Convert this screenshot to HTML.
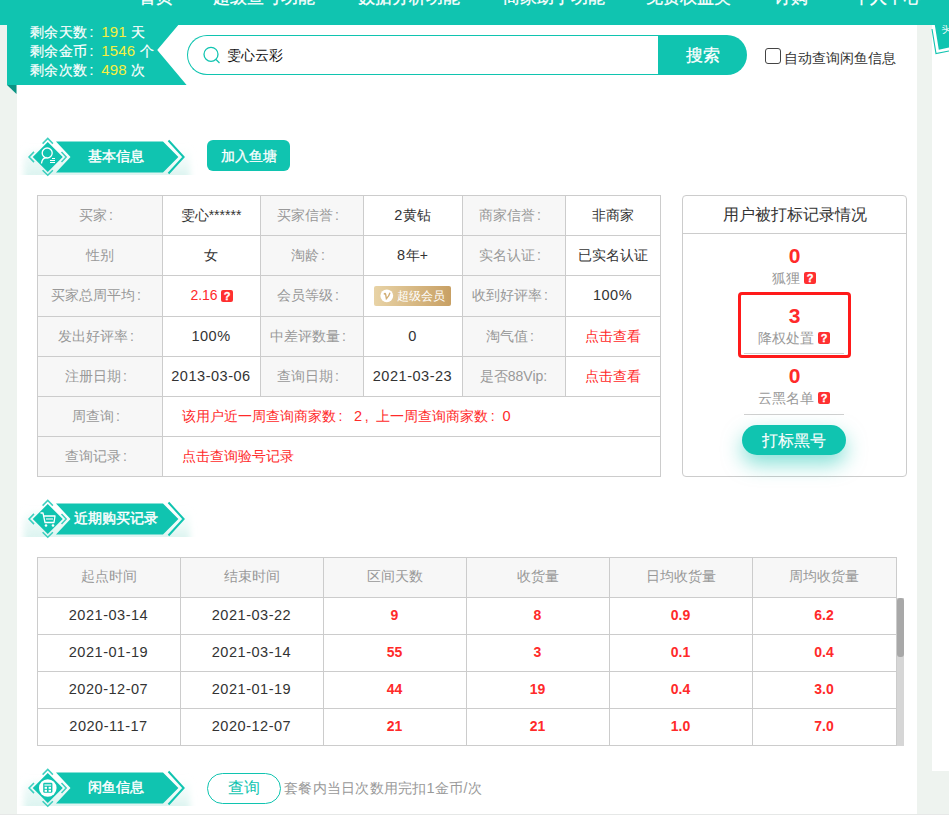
<!DOCTYPE html>
<html><head><meta charset="utf-8"><style>
html,body{margin:0;padding:0;width:949px;height:815px;overflow:hidden;background:#fff}
body{position:relative;font-family:"Liberation Sans",sans-serif}
.b{position:absolute}
.c{display:inline-block;width:1em;text-indent:.17em;text-align:left}
.n{font-size:1.04em;letter-spacing:.5px}
.t{position:absolute;white-space:nowrap;line-height:19px}
.q{position:absolute;width:12px;height:12px;background:#ff3030;color:#fff;border-radius:2px;font-size:11px;line-height:12px;text-align:center;font-weight:bold;-webkit-text-stroke:.3px #fff}
</style></head><body>
<div class="b" style="left:0px;top:0px;width:949px;height:815px;background:#eef3ef"></div>
<div class="b" style="left:17px;top:25px;width:900px;height:789px;background:#fff"></div>
<div class="b" style="left:932px;top:25px;width:17px;height:746px;background:#fff"></div>
<div class="b" style="left:0px;top:0px;width:949px;height:25px;background:#10c4b0"></div>
<div class="t" style="left:139px;top:-12px;font-size:17px;color:#fff;-webkit-text-stroke:.3px #fff;">首页</div>
<div class="t" style="left:213px;top:-12px;font-size:17px;color:#fff;-webkit-text-stroke:.3px #fff;">超级查号功能</div>
<div class="t" style="left:358px;top:-12px;font-size:17px;color:#fff;-webkit-text-stroke:.3px #fff;">数据分析功能</div>
<div class="t" style="left:503px;top:-12px;font-size:17px;color:#fff;-webkit-text-stroke:.3px #fff;">商家助手功能</div>
<div class="t" style="left:646px;top:-12px;font-size:17px;color:#fff;-webkit-text-stroke:.3px #fff;">免费权益类</div>
<div class="t" style="left:774px;top:-12px;font-size:17px;color:#fff;-webkit-text-stroke:.3px #fff;">订购</div>
<div class="t" style="left:853px;top:-12px;font-size:17px;color:#fff;-webkit-text-stroke:.3px #fff;">个人中心</div>
<svg class="b" style="left:925px;top:25px" width="24" height="40" viewBox="0 0 24 40">
<polygon points="9.8,0 13.8,24.7 24,22.5 24,0" fill="#10c4b0"/>
<polyline points="7,4 11,28.5 24,26" fill="none" stroke="#10c4b0" stroke-width="1.1"/>
<text x="17" y="8" font-size="10" fill="#fff" transform="rotate(-10 17 8)">头</text>
</svg>
<svg class="b" style="left:0;top:25px" width="200" height="75" viewBox="0 0 200 75">
<polygon points="7,0 178.3,0 157.2,25 186.6,60 7,60" fill="#10c4b0"/>
<polygon points="7,60 16.5,60 16.5,69" fill="#0a9484"/>
</svg>
<div class="t" style="left:30px;top:23px;font-size:14px;color:#fff;line-height:17px;letter-spacing:.3px;-webkit-text-stroke:.2px #fff">剩余天数<span class="c">:</span><span style="color:#f7ef3f;font-size:15px;letter-spacing:.2px;margin-left:0;-webkit-text-stroke:0">191</span> 天</div>
<div class="t" style="left:30px;top:42px;font-size:14px;color:#fff;line-height:17px;letter-spacing:.3px;-webkit-text-stroke:.2px #fff">剩余金币<span class="c">:</span><span style="color:#f7ef3f;font-size:15px;letter-spacing:.2px;margin-left:0;-webkit-text-stroke:0">1546</span> 个</div>
<div class="t" style="left:30px;top:61px;font-size:14px;color:#fff;line-height:17px;letter-spacing:.3px;-webkit-text-stroke:.2px #fff">剩余次数<span class="c">:</span><span style="color:#f7ef3f;font-size:15px;letter-spacing:.2px;margin-left:0;-webkit-text-stroke:0">498</span> 次</div>
<div class="b" style="left:187px;top:35px;width:500px;height:40px;border:1px solid #10c4b0;border-right:none;border-radius:20px 0 0 20px;box-sizing:border-box"></div>
<div class="b" style="left:658px;top:35px;width:89px;height:40px;background:#10c4b0;border-radius:0 20px 20px 0"></div>
<svg class="b" style="left:200px;top:44px" width="24" height="22" viewBox="0 0 24 22">
<circle cx="11" cy="10.3" r="7" fill="none" stroke="#10c4b0" stroke-width="1.3"/>
<line x1="16" y1="15.5" x2="19.5" y2="19" stroke="#10c4b0" stroke-width="1.3"/>
</svg>
<div class="t" style="left:227px;top:46px;font-size:14px;color:#111;">雯心云彩</div>
<div class="t" style="left:658px;top:46px;font-size:17px;color:#fff;width:89px;text-align:center;-webkit-text-stroke:.25px #fff;">搜索</div>
<div class="b" style="left:765px;top:48px;width:16px;height:16px;border:1px solid #444;border-radius:3px;box-sizing:border-box"></div>
<div class="t" style="left:784px;top:49px;font-size:14px;color:#333;">自动查询闲鱼信息</div>
<svg class="b" style="left:0;top:131.8px" width="200" height="50" viewBox="0 131.8 200 50">
<defs><linearGradient id="g156" x1="0" y1="0" x2="0" y2="1"><stop offset="0" stop-color="#e3f7f4" stop-opacity="0"/><stop offset="1" stop-color="#d3f1ec"/></linearGradient>
<filter id="f156" x="-20%" y="-50%" width="140%" height="200%"><feGaussianBlur stdDeviation="3"/></filter>
<clipPath id="c156"><rect x="0" y="131.8" width="200" height="43.0"/></clipPath></defs>
<g clip-path="url(#c156)"><rect x="24" y="146.8" width="166" height="34" fill="url(#g156)" filter="url(#f156)"/>
<ellipse cx="44" cy="162.8" rx="20" ry="14" fill="#d9f3ef" filter="url(#f156)" opacity=".25"/></g>
<polygon points="56,141.3 163,141.3 178.4,156.8 163,172.3 56,172.3 70.5,156.8" fill="#10c4b0"/>
<polyline points="168.5,140.3 183.6,156.8 168.5,173.3" fill="none" stroke="#10c4b0" stroke-width="2"/>
<polygon points="47.75,141.8 62.75,156.8 47.75,171.8 32.75,156.8" fill="#10c4b0"/>
<g fill="none" stroke="#10c4b0" stroke-width="1.5" opacity=".8">
<polyline points="42.6,143.4 47.75,138.20000000000002 52.9,143.4"/>
<polyline points="42.6,170.0 47.75,175.0 52.9,170.0"/>
<polyline points="34,151.70000000000002 29,156.8 34,161.9"/>
<polyline points="61.5,151.70000000000002 66.2,156.8 61.5,161.9"/></g>
<circle cx="47.2" cy="152.8" r="5" fill="none" stroke="#fff" stroke-width="1.3"/>
<path d="M41.5,163.3 Q42,157.8 46.5,157.3" fill="none" stroke="#fff" strole-width="1.3" stroke-width="1.3"/>
<line x1="52" y1="158.3" x2="55" y2="158.3" stroke="#fff" stroke-width="1"/>
<line x1="50" y1="160.3" x2="55" y2="160.3" stroke="#fff" stroke-width="1"/>
<line x1="50" y1="162.3" x2="55" y2="162.3" stroke="#fff" stroke-width="1"/>
</svg>
<div class="t" style="left:88px;top:146.8px;font-size:14px;color:#fff;-webkit-text-stroke:0.45px #fff;">基本信息</div>
<svg class="b" style="left:0;top:493.6px" width="200" height="50" viewBox="0 493.6 200 50">
<defs><linearGradient id="g518" x1="0" y1="0" x2="0" y2="1"><stop offset="0" stop-color="#e3f7f4" stop-opacity="0"/><stop offset="1" stop-color="#d3f1ec"/></linearGradient>
<filter id="f518" x="-20%" y="-50%" width="140%" height="200%"><feGaussianBlur stdDeviation="3"/></filter>
<clipPath id="c518"><rect x="0" y="493.6" width="200" height="43.0"/></clipPath></defs>
<g clip-path="url(#c518)"><rect x="24" y="508.6" width="166" height="34" fill="url(#g518)" filter="url(#f518)"/>
<ellipse cx="44" cy="524.6" rx="20" ry="14" fill="#d9f3ef" filter="url(#f518)" opacity=".25"/></g>
<polygon points="56,503.1 163,503.1 178.4,518.6 163,534.1 56,534.1 70.5,518.6" fill="#10c4b0"/>
<polyline points="168.5,502.1 183.6,518.6 168.5,535.1" fill="none" stroke="#10c4b0" stroke-width="2"/>
<polygon points="47.75,503.6 62.75,518.6 47.75,533.6 32.75,518.6" fill="#10c4b0"/>
<g fill="none" stroke="#10c4b0" stroke-width="1.5" opacity=".8">
<polyline points="42.6,505.20000000000005 47.75,500.0 52.9,505.20000000000005"/>
<polyline points="42.6,531.8000000000001 47.75,536.8000000000001 52.9,531.8000000000001"/>
<polyline points="34,513.5 29,518.6 34,523.7"/>
<polyline points="61.5,513.5 66.2,518.6 61.5,523.7"/></g>
<path d="M40.5,512.6 L43,512.6 L45,522.1 L54,522.1 L55,515.6 L44,515.6" fill="none" stroke="#fff" stroke-width="1.3" stroke-linejoin="round"/>
<line x1="46" y1="518.6" x2="53" y2="518.6" stroke="#fff" stroke-width="1.1"/>
<circle cx="46" cy="525.1" r="1.3" fill="#fff"/><circle cx="53" cy="525.1" r="1.3" fill="#fff"/>
</svg>
<div class="t" style="left:74px;top:508.6px;font-size:14px;color:#fff;-webkit-text-stroke:0.45px #fff;">近期购买记录</div>
<svg class="b" style="left:0;top:762.6px" width="200" height="50" viewBox="0 762.6 200 50">
<defs><linearGradient id="g787" x1="0" y1="0" x2="0" y2="1"><stop offset="0" stop-color="#e3f7f4" stop-opacity="0"/><stop offset="1" stop-color="#d3f1ec"/></linearGradient>
<filter id="f787" x="-20%" y="-50%" width="140%" height="200%"><feGaussianBlur stdDeviation="3"/></filter>
<clipPath id="c787"><rect x="0" y="762.6" width="200" height="43.0"/></clipPath></defs>
<g clip-path="url(#c787)"><rect x="24" y="777.6" width="166" height="34" fill="url(#g787)" filter="url(#f787)"/>
<ellipse cx="44" cy="793.6" rx="20" ry="14" fill="#d9f3ef" filter="url(#f787)" opacity=".25"/></g>
<polygon points="56,772.1 163,772.1 178.4,787.6 163,803.1 56,803.1 70.5,787.6" fill="#10c4b0"/>
<polyline points="168.5,771.1 183.6,787.6 168.5,804.1" fill="none" stroke="#10c4b0" stroke-width="2"/>
<polygon points="47.75,772.6 62.75,787.6 47.75,802.6 32.75,787.6" fill="#10c4b0"/>
<g fill="none" stroke="#10c4b0" stroke-width="1.5" opacity=".8">
<polyline points="42.6,774.2 47.75,769.0 52.9,774.2"/>
<polyline points="42.6,800.8000000000001 47.75,805.8000000000001 52.9,800.8000000000001"/>
<polyline points="34,782.5 29,787.6 34,792.7"/>
<polyline points="61.5,782.5 66.2,787.6 61.5,792.7"/></g>
<circle cx="47.75" cy="787.6" r="8.8" fill="#fff"/>
<rect x="43.2" y="782.4" width="9.2" height="10" rx="1.2" fill="#10c4b0"/>
<rect x="44.4" y="784.0" width="6.8" height="1.2" fill="#fff"/>
<rect x="44.6" y="786.4" width="2.4" height="2" fill="#fff"/><rect x="48.6" y="786.4" width="2.4" height="2" fill="#fff"/>
<rect x="44.6" y="789.4" width="2.4" height="2" fill="#fff"/><rect x="48.6" y="789.4" width="2.4" height="2" fill="#fff"/>
</svg>
<div class="t" style="left:88px;top:777.6px;font-size:14px;color:#fff;-webkit-text-stroke:0.45px #fff;">闲鱼信息</div>
<div class="b" style="left:207px;top:140px;width:83px;height:31px;background:#10c4b0;border-radius:6px"></div>
<div class="t" style="left:207px;top:147px;font-size:14px;color:#fff;width:83px;text-align:center;-webkit-text-stroke:.3px #fff;">加入鱼塘</div>
<div class="b" style="left:38px;top:196px;width:124px;height:39px;background:#f7f7f7"></div>
<div class="b" style="left:261px;top:196px;width:102px;height:39px;background:#f7f7f7"></div>
<div class="b" style="left:463px;top:196px;width:102px;height:39px;background:#f7f7f7"></div>
<div class="b" style="left:38px;top:236px;width:124px;height:39px;background:#f7f7f7"></div>
<div class="b" style="left:261px;top:236px;width:102px;height:39px;background:#f7f7f7"></div>
<div class="b" style="left:463px;top:236px;width:102px;height:39px;background:#f7f7f7"></div>
<div class="b" style="left:38px;top:276px;width:124px;height:40px;background:#f7f7f7"></div>
<div class="b" style="left:261px;top:276px;width:102px;height:40px;background:#f7f7f7"></div>
<div class="b" style="left:463px;top:276px;width:102px;height:40px;background:#f7f7f7"></div>
<div class="b" style="left:38px;top:317px;width:124px;height:39px;background:#f7f7f7"></div>
<div class="b" style="left:261px;top:317px;width:102px;height:39px;background:#f7f7f7"></div>
<div class="b" style="left:463px;top:317px;width:102px;height:39px;background:#f7f7f7"></div>
<div class="b" style="left:38px;top:357px;width:124px;height:39px;background:#f7f7f7"></div>
<div class="b" style="left:261px;top:357px;width:102px;height:39px;background:#f7f7f7"></div>
<div class="b" style="left:463px;top:357px;width:102px;height:39px;background:#f7f7f7"></div>
<div class="b" style="left:38px;top:397px;width:124px;height:39px;background:#f7f7f7"></div>
<div class="b" style="left:38px;top:437px;width:124px;height:39px;background:#f7f7f7"></div>
<div class="b" style="left:37px;top:195px;width:624px;height:1px;background:#cccccc"></div>
<div class="b" style="left:37px;top:235px;width:624px;height:1px;background:#cccccc"></div>
<div class="b" style="left:37px;top:275px;width:624px;height:1px;background:#cccccc"></div>
<div class="b" style="left:37px;top:316px;width:624px;height:1px;background:#cccccc"></div>
<div class="b" style="left:37px;top:356px;width:624px;height:1px;background:#cccccc"></div>
<div class="b" style="left:37px;top:396px;width:624px;height:1px;background:#cccccc"></div>
<div class="b" style="left:37px;top:436px;width:624px;height:1px;background:#cccccc"></div>
<div class="b" style="left:37px;top:476px;width:624px;height:1px;background:#cccccc"></div>
<div class="b" style="left:37px;top:195px;width:1px;height:281px;background:#cccccc"></div>
<div class="b" style="left:162px;top:195px;width:1px;height:281px;background:#cccccc"></div>
<div class="b" style="left:260px;top:195px;width:1px;height:201px;background:#cccccc"></div>
<div class="b" style="left:363px;top:195px;width:1px;height:201px;background:#cccccc"></div>
<div class="b" style="left:462px;top:195px;width:1px;height:201px;background:#cccccc"></div>
<div class="b" style="left:565px;top:195px;width:1px;height:201px;background:#cccccc"></div>
<div class="b" style="left:660px;top:195px;width:1px;height:281px;background:#cccccc"></div>
<div class="t" style="left:37px;top:205.5px;font-size:14px;color:#999;width:125px;text-align:center;">买家<span class="c">:</span></div>
<div class="t" style="left:162px;top:205.5px;font-size:14px;color:#333;width:98px;text-align:center;">雯心******</div>
<div class="t" style="left:260px;top:205.5px;font-size:14px;color:#999;width:103px;text-align:center;">买家信誉<span class="c">:</span></div>
<div class="t" style="left:363px;top:205.5px;font-size:14px;color:#333;width:99px;text-align:center;"><span class="n">2</span>黄钻</div>
<div class="t" style="left:462px;top:205.5px;font-size:14px;color:#999;width:103px;text-align:center;">商家信誉<span class="c">:</span></div>
<div class="t" style="left:565px;top:205.5px;font-size:14px;color:#333;width:95px;text-align:center;">非商家</div>
<div class="t" style="left:37px;top:245.5px;font-size:14px;color:#999;width:125px;text-align:center;">性别</div>
<div class="t" style="left:162px;top:245.5px;font-size:14px;color:#333;width:98px;text-align:center;">女</div>
<div class="t" style="left:260px;top:245.5px;font-size:14px;color:#999;width:103px;text-align:center;">淘龄<span class="c">:</span></div>
<div class="t" style="left:363px;top:245.5px;font-size:14px;color:#333;width:99px;text-align:center;"><span class="n">8</span>年+</div>
<div class="t" style="left:462px;top:245.5px;font-size:14px;color:#999;width:103px;text-align:center;">实名认证<span class="c">:</span></div>
<div class="t" style="left:565px;top:245.5px;font-size:14px;color:#333;width:95px;text-align:center;">已实名认证</div>
<div class="t" style="left:37px;top:286.0px;font-size:14px;color:#999;width:125px;text-align:center;">买家总周平均<span class="c">:</span></div>
<div class="t" style="left:162px;top:286.0px;font-size:14px;color:#333;width:84px;text-align:center;"><span style="color:#ff2a2a">2.16</span></div>
<span class="q" style="left:221px;top:290px">?</span>
<div class="t" style="left:260px;top:286.0px;font-size:14px;color:#999;width:103px;text-align:center;">会员等级<span class="c">:</span></div>
<div class="b" style="left:374px;top:286px;width:77px;height:20px;border-radius:2px;background:linear-gradient(90deg,#e8d3a6,#c8a064)"></div>
<svg class="b" style="left:380px;top:289px" width="14" height="14" viewBox="0 0 14 14"><circle cx="6.8" cy="6.8" r="6.4" fill="#fff"/><path d="M4.3,5 Q5,4 5.6,5.2 L6.4,9.6 Q9,7.5 9.8,4.2" fill="none" stroke="#d2ae74" stroke-width="1.4" stroke-linecap="round"/></svg>
<div class="t" style="left:397px;top:286.5px;font-size:12px;color:#fff;">超级会员</div>
<div class="t" style="left:462px;top:286.0px;font-size:14px;color:#999;width:103px;text-align:center;">收到好评率<span class="c">:</span></div>
<div class="t" style="left:565px;top:286.0px;font-size:14px;color:#333;width:95px;text-align:center;"><span class="n">100%</span></div>
<div class="t" style="left:37px;top:326.5px;font-size:14px;color:#999;width:125px;text-align:center;">发出好评率<span class="c">:</span></div>
<div class="t" style="left:162px;top:326.5px;font-size:14px;color:#333;width:98px;text-align:center;"><span class="n">100%</span></div>
<div class="t" style="left:260px;top:326.5px;font-size:14px;color:#999;width:103px;text-align:center;">中差评数量<span class="c">:</span></div>
<div class="t" style="left:363px;top:326.5px;font-size:14px;color:#333;width:99px;text-align:center;"><span class="n">0</span></div>
<div class="t" style="left:462px;top:326.5px;font-size:14px;color:#999;width:103px;text-align:center;">淘气值<span class="c">:</span></div>
<div class="t" style="left:565px;top:326.5px;font-size:14px;color:#ff2a2a;width:95px;text-align:center;">点击查看</div>
<div class="t" style="left:37px;top:366.5px;font-size:14px;color:#999;width:125px;text-align:center;">注册日期<span class="c">:</span></div>
<div class="t" style="left:162px;top:366.5px;font-size:14px;color:#333;width:98px;text-align:center;"><span class="n">2013-03-06</span></div>
<div class="t" style="left:260px;top:366.5px;font-size:14px;color:#999;width:103px;text-align:center;">查询日期<span class="c">:</span></div>
<div class="t" style="left:363px;top:366.5px;font-size:14px;color:#333;width:99px;text-align:center;"><span class="n">2021-03-23</span></div>
<div class="t" style="left:462px;top:366.5px;font-size:14px;color:#999;width:103px;text-align:center;">是否88Vip:</div>
<div class="t" style="left:565px;top:366.5px;font-size:14px;color:#ff2a2a;width:95px;text-align:center;">点击查看</div>
<div class="t" style="left:37px;top:406.5px;font-size:14px;color:#999;width:125px;text-align:center;">周查询<span class="c">:</span></div>
<div class="t" style="left:182px;top:406.5px;font-size:14px;color:#ff2a2a;">该用户近一周查询商家数<span class="c">:</span> <span class="n">2</span><span class="c">,</span>上一周查询商家数<span class="c">:</span><span class="n">0</span></div>
<div class="t" style="left:37px;top:446.5px;font-size:14px;color:#999;width:125px;text-align:center;">查询记录<span class="c">:</span></div>
<div class="t" style="left:182px;top:446.5px;font-size:14px;color:#ff2a2a;">点击查询验号记录</div>
<div class="b" style="left:682px;top:195px;width:225px;height:282px;border:1px solid #cccccc;border-radius:4px;box-sizing:border-box"></div>
<div class="b" style="left:683px;top:233px;width:223px;height:1px;background:#cccccc"></div>
<div class="t" style="left:682px;top:205px;font-size:16px;color:#333;width:225px;text-align:center;">用户被打标记录情况</div>
<div class="t" style="left:682px;top:246px;font-size:21px;color:#ff2a2a;width:225px;text-align:center;font-weight:bold;">0</div>
<div class="t" style="left:772px;top:269px;font-size:14px;color:#999;">狐狸</div>
<span class="q" style="left:804px;top:272px">?</span>
<div class="t" style="left:682px;top:306px;font-size:21px;color:#ff2a2a;width:225px;text-align:center;font-weight:bold;">3</div>
<div class="t" style="left:758px;top:329px;font-size:14px;color:#999;">降权处置</div>
<span class="q" style="left:818px;top:332px">?</span>
<div class="b" style="left:744px;top:353px;width:100px;height:1px;background:#d0d0d0"></div>
<div class="t" style="left:682px;top:366px;font-size:21px;color:#ff2a2a;width:225px;text-align:center;font-weight:bold;">0</div>
<div class="t" style="left:758px;top:389px;font-size:14px;color:#999;">云黑名单</div>
<span class="q" style="left:818px;top:392px">?</span>
<div class="b" style="left:744px;top:414px;width:100px;height:1px;background:#d0d0d0"></div>
<div class="b" style="left:738px;top:292px;width:113px;height:66px;border:3px solid #ff1a1a;border-radius:4px;box-sizing:border-box"></div>
<div class="b" style="left:742px;top:425px;width:104px;height:30px;background:#10c4b0;border-radius:15px;box-shadow:0 9px 20px rgba(16,196,176,.5)"></div>
<div class="t" style="left:742px;top:430.5px;font-size:16px;color:#fff;width:104px;text-align:center;-webkit-text-stroke:.1px #fff;">打标黑号</div>
<div class="b" style="left:38px;top:558px;width:858px;height:39px;background:#f7f7f7"></div>
<div class="b" style="left:37px;top:557px;width:860px;height:1px;background:#cccccc"></div>
<div class="b" style="left:37px;top:597px;width:860px;height:1px;background:#cccccc"></div>
<div class="b" style="left:37px;top:634px;width:860px;height:1px;background:#cccccc"></div>
<div class="b" style="left:37px;top:671px;width:860px;height:1px;background:#cccccc"></div>
<div class="b" style="left:37px;top:708px;width:860px;height:1px;background:#cccccc"></div>
<div class="b" style="left:37px;top:745px;width:860px;height:1px;background:#cccccc"></div>
<div class="b" style="left:37px;top:557px;width:1px;height:189px;background:#cccccc"></div>
<div class="b" style="left:180px;top:557px;width:1px;height:189px;background:#cccccc"></div>
<div class="b" style="left:323px;top:557px;width:1px;height:189px;background:#cccccc"></div>
<div class="b" style="left:466px;top:557px;width:1px;height:189px;background:#cccccc"></div>
<div class="b" style="left:609px;top:557px;width:1px;height:189px;background:#cccccc"></div>
<div class="b" style="left:752px;top:557px;width:1px;height:189px;background:#cccccc"></div>
<div class="b" style="left:896px;top:557px;width:1px;height:189px;background:#cccccc"></div>
<div class="b" style="left:897px;top:598px;width:7px;height:148px;background:#d6d6d6"></div>
<div class="b" style="left:897px;top:598px;width:7px;height:59px;background:#a8a8a8;border-radius:3px"></div>
<div class="t" style="left:37px;top:567px;font-size:14px;color:#999;width:143px;text-align:center;">起点时间</div>
<div class="t" style="left:180px;top:567px;font-size:14px;color:#999;width:143px;text-align:center;">结束时间</div>
<div class="t" style="left:323px;top:567px;font-size:14px;color:#999;width:143px;text-align:center;">区间天数</div>
<div class="t" style="left:466px;top:567px;font-size:14px;color:#999;width:143px;text-align:center;">收货量</div>
<div class="t" style="left:609px;top:567px;font-size:14px;color:#999;width:143px;text-align:center;">日均收货量</div>
<div class="t" style="left:752px;top:567px;font-size:14px;color:#999;width:144px;text-align:center;">周均收货量</div>
<div class="t" style="left:37px;top:606.0px;font-size:14px;color:#333;width:143px;text-align:center;"><span class="n">2021-03-14</span></div>
<div class="t" style="left:180px;top:606.0px;font-size:14px;color:#333;width:143px;text-align:center;"><span class="n">2021-03-22</span></div>
<div class="t" style="left:323px;top:606.0px;font-size:14px;color:#ff2a2a;width:143px;text-align:center;font-weight:bold;">9</div>
<div class="t" style="left:466px;top:606.0px;font-size:14px;color:#ff2a2a;width:143px;text-align:center;font-weight:bold;">8</div>
<div class="t" style="left:609px;top:606.0px;font-size:14px;color:#ff2a2a;width:143px;text-align:center;font-weight:bold;">0.9</div>
<div class="t" style="left:752px;top:606.0px;font-size:14px;color:#ff2a2a;width:144px;text-align:center;font-weight:bold;">6.2</div>
<div class="t" style="left:37px;top:643.0px;font-size:14px;color:#333;width:143px;text-align:center;"><span class="n">2021-01-19</span></div>
<div class="t" style="left:180px;top:643.0px;font-size:14px;color:#333;width:143px;text-align:center;"><span class="n">2021-03-14</span></div>
<div class="t" style="left:323px;top:643.0px;font-size:14px;color:#ff2a2a;width:143px;text-align:center;font-weight:bold;">55</div>
<div class="t" style="left:466px;top:643.0px;font-size:14px;color:#ff2a2a;width:143px;text-align:center;font-weight:bold;">3</div>
<div class="t" style="left:609px;top:643.0px;font-size:14px;color:#ff2a2a;width:143px;text-align:center;font-weight:bold;">0.1</div>
<div class="t" style="left:752px;top:643.0px;font-size:14px;color:#ff2a2a;width:144px;text-align:center;font-weight:bold;">0.4</div>
<div class="t" style="left:37px;top:680.0px;font-size:14px;color:#333;width:143px;text-align:center;"><span class="n">2020-12-07</span></div>
<div class="t" style="left:180px;top:680.0px;font-size:14px;color:#333;width:143px;text-align:center;"><span class="n">2021-01-19</span></div>
<div class="t" style="left:323px;top:680.0px;font-size:14px;color:#ff2a2a;width:143px;text-align:center;font-weight:bold;">44</div>
<div class="t" style="left:466px;top:680.0px;font-size:14px;color:#ff2a2a;width:143px;text-align:center;font-weight:bold;">19</div>
<div class="t" style="left:609px;top:680.0px;font-size:14px;color:#ff2a2a;width:143px;text-align:center;font-weight:bold;">0.4</div>
<div class="t" style="left:752px;top:680.0px;font-size:14px;color:#ff2a2a;width:144px;text-align:center;font-weight:bold;">3.0</div>
<div class="t" style="left:37px;top:717.0px;font-size:14px;color:#333;width:143px;text-align:center;"><span class="n">2020-11-17</span></div>
<div class="t" style="left:180px;top:717.0px;font-size:14px;color:#333;width:143px;text-align:center;"><span class="n">2020-12-07</span></div>
<div class="t" style="left:323px;top:717.0px;font-size:14px;color:#ff2a2a;width:143px;text-align:center;font-weight:bold;">21</div>
<div class="t" style="left:466px;top:717.0px;font-size:14px;color:#ff2a2a;width:143px;text-align:center;font-weight:bold;">21</div>
<div class="t" style="left:609px;top:717.0px;font-size:14px;color:#ff2a2a;width:143px;text-align:center;font-weight:bold;">1.0</div>
<div class="t" style="left:752px;top:717.0px;font-size:14px;color:#ff2a2a;width:144px;text-align:center;font-weight:bold;">7.0</div>
<div class="b" style="left:207px;top:773px;width:74px;height:31px;border:1px solid #10c4b0;border-radius:16px;box-sizing:border-box"></div>
<div class="t" style="left:207px;top:778px;font-size:16px;color:#10c4b0;width:74px;text-align:center;">查询</div>
<div class="t" style="left:284px;top:779px;font-size:14px;color:#999;letter-spacing:.25px;">套餐内当日次数用完扣<span class="n">1</span>金币/次</div>
<div class="b" style="left:0px;top:814px;width:949px;height:1px;background:#e6e8e7"></div>
</body></html>
